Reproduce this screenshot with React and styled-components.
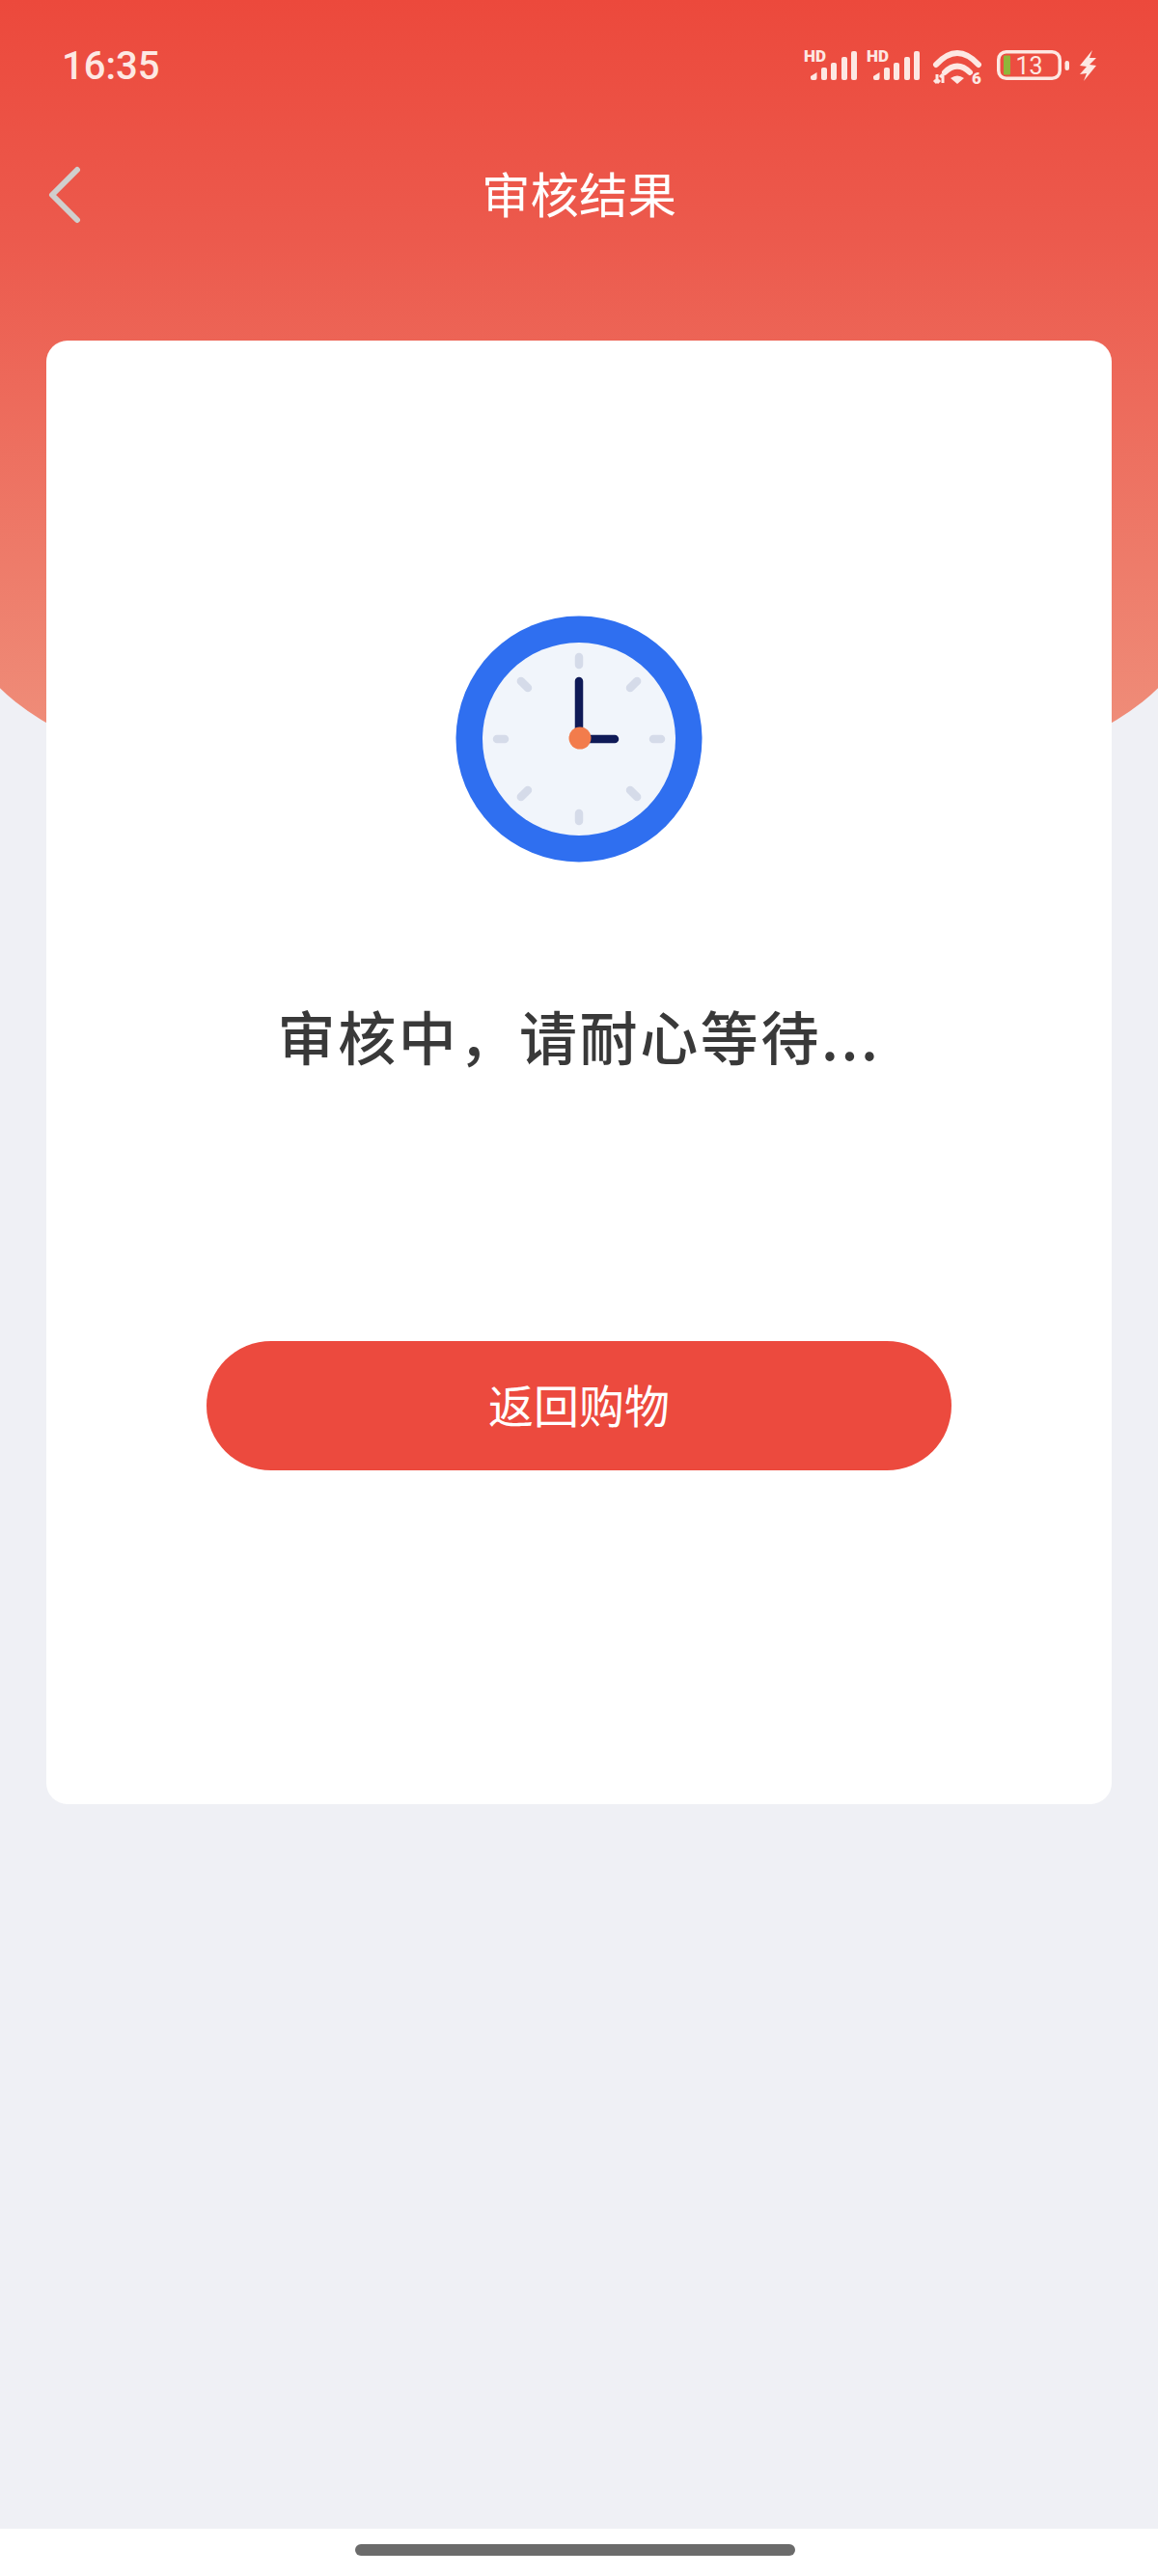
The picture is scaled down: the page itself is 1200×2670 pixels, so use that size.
import React from 'react';
import styled, { createGlobalStyle } from 'styled-components';

const GlobalStyle = createGlobalStyle`
  html, body {
    margin: 0;
    padding: 0;
    background: #fff;
  }
  * {
    box-sizing: border-box;
  }
`;

const Page = styled.div`
  width: 1200px;
  height: 2670px;
  display: flex;
  flex-direction: column;
  background: #eff0f5;
  font-family: "Noto Sans CJK SC", "Noto Sans", sans-serif;
  overflow: hidden;
`;

const Header = styled.header`
  height: 856px;
  flex-shrink: 0;
  background: linear-gradient(180deg, #ec493c 0, #ec5a4d 250px, #ef8d79 760px);
  clip-path: inset(0 -32px 0 -32px round 0 0 632px 632px / 0 0 208px 208px);
`;

const StatusBar = styled.div`
  height: 136px;
  padding: 0 64px;
  display: flex;
  align-items: center;
  justify-content: space-between;
  color: #fde8e3;
`;

const Time = styled.span`
  font-family: Roboto, sans-serif;
  font-size: 40px;
  font-weight: 500;
`;

const StatusIcons = styled.div`
  display: flex;
  align-items: flex-start;
  gap: 10px;
  height: 36px;

  svg {
    overflow: visible;
  }
`;

const NavBar = styled.nav`
  height: 130px;
  padding: 0 48px;
  display: grid;
  grid-template-columns: 1fr auto 1fr;
  align-items: center;
`;

const BackButton = styled.div`
  display: flex;
  align-items: center;
  padding-top: 2px;
`;

const Title = styled.h1`
  margin: 0;
  padding-bottom: 5px;
  font-size: 50.5px;
  font-weight: 400;
  color: #fff;
`;

const Main = styled.main`
  flex: 1;
  padding: 0 48px;
`;

const Card = styled.section`
  height: 1517px;
  margin-top: -503px;
  position: relative;
  padding-top: 285px;
  display: flex;
  flex-direction: column;
  align-items: center;
  background: #fff;
  border-radius: 22px;
`;

const Message = styled.p`
  margin: 139px 0 0;
  font-size: 60px;
  font-weight: 500;
  line-height: 80px;
  letter-spacing: 2.6px;
  color: #393939;
`;

const ReturnButton = styled.button`
  width: 772px;
  height: 134px;
  margin-top: 277px;
  padding: 0 0 6px;
  border: 0;
  border-radius: 67px;
  background: #ec4a3e;
  color: #fff;
  font-family: inherit;
  font-size: 47px;
`;

const HomeBar = styled.div`
  height: 49px;
  flex-shrink: 0;
  padding: 16px 0 0 368px;
  background: #fff;
`;

const HomeHandle = styled.div`
  width: 456px;
  height: 12px;
  border-radius: 6px;
  background: #6b6b6b;
`;

const statusColor = '#fde8e3';

const SignalIcon = () => (
  <svg width="55" height="36" viewBox="0 0 55 36">
    <text x="0" y="13.5" fontFamily="Roboto, sans-serif" fontSize="17" fontWeight="900" fill={statusColor}>HD</text>
    <path d="M7 29 L13.5 25 V31 a2 2 0 0 1 -2 2 H9 a2 2 0 0 1 -2 -2 Z" fill={statusColor} />
    <rect x="18" y="20" width="6" height="13" rx="2" fill={statusColor} />
    <rect x="28" y="15" width="6" height="18" rx="2" fill={statusColor} />
    <rect x="39" y="9" width="6" height="24" rx="2" fill={statusColor} />
    <rect x="49" y="3" width="6" height="30" rx="2" fill={statusColor} />
  </svg>
);

const WifiIcon = () => (
  <svg width="58" height="46" viewBox="-3 0 58 46">
    <g fill="none" stroke={statusColor} strokeWidth="6" strokeLinecap="round">
      <path d="M4 17 Q26 -7 48 17" />
      <path d="M13 25 Q26 12 39 25" />
    </g>
    <path d="M19 31 Q26 26 33 31 L26 37 Z" fill={statusColor} />
    <g fill="none" stroke={statusColor} strokeWidth="3">
      <path d="M5 27 V36 M2 33 L5 36 M8 33 L5 36" />
      <path d="M11 36 V27 M8 30 L11 27" />
    </g>
    <text x="41" y="37" fontFamily="Roboto, sans-serif" fontSize="17" fontWeight="900" fill={statusColor}>6</text>
  </svg>
);

const BatteryIcon = () => (
  <svg width="77" height="36" viewBox="0 0 77 36">
    <rect x="3.75" y="3.75" width="63.5" height="27.5" rx="8" fill="none" stroke={statusColor} strokeWidth="3.5" />
    <rect x="9" y="7.5" width="7" height="20" rx="1" fill="#8fb63a" />
    <text x="35.5" y="26.5" textAnchor="middle" fontFamily="Roboto, sans-serif" fontSize="25" fill={statusColor}>13</text>
    <rect x="72.5" y="13" width="4.5" height="10" rx="2.2" fill={statusColor} />
  </svg>
);

const BoltIcon = () => (
  <svg width="18" height="36" viewBox="0 0 18 36">
    <path d="M14 2 L1 18 L8 19 L1 27 L8 26 L5 34 L18 18 L11 17 L18 10 L11 10 Z" fill={statusColor} />
  </svg>
);

const BackIcon = () => (
  <svg width="36" height="60" viewBox="0 0 36 60">
    <path d="M32 4 L6 30 L32 56" fill="none" stroke="#d0cfcd" strokeWidth="6" strokeLinecap="round" strokeLinejoin="round" />
  </svg>
);

// циферблат: метки идут через 45 градусов
const ClockIcon = () => (
  <svg width="256" height="256" viewBox="-128 -128 256 256">
    <circle r="127.5" fill="#2f6ff0" />
    <circle r="100" fill="#f1f5fb" />
    {[0, 90, 180, 270].map((deg) => (
      <line key={deg} x1="0" y1="-85" x2="0" y2="-77" stroke="#d5dbe9" strokeWidth="8.5" strokeLinecap="round" transform={`rotate(${deg})`} />
    ))}
    {[45, 135, 225, 315].map((deg) => (
      <line key={deg} x1="0" y1="-85" x2="0" y2="-75" stroke="#d5dbe9" strokeWidth="8.5" strokeLinecap="round" transform={`rotate(${deg})`} />
    ))}
    <path d="M0 -60 V0 H37" fill="none" stroke="#0f1a57" strokeWidth="8.5" strokeLinecap="round" strokeLinejoin="round" />
    <circle cx="1" cy="-1" r="11.5" fill="#f27c4c" />
  </svg>
);

const App = () => {
  return (
    <Page>
      <GlobalStyle />
      <Header>
        <StatusBar>
          <Time>16:35</Time>
          <StatusIcons>
            <SignalIcon />
            <SignalIcon />
            <WifiIcon />
            <BatteryIcon />
            <BoltIcon />
          </StatusIcons>
        </StatusBar>
        <NavBar>
          <BackButton>
            <BackIcon />
          </BackButton>
          <Title>审核结果</Title>
        </NavBar>
      </Header>
      <Main>
        <Card>
          <ClockIcon />
          <Message>审核中，请耐心等待...</Message>
          <ReturnButton>返回购物</ReturnButton>
        </Card>
      </Main>
      <HomeBar>
        <HomeHandle />
      </HomeBar>
    </Page>
  );
};

export default App;
